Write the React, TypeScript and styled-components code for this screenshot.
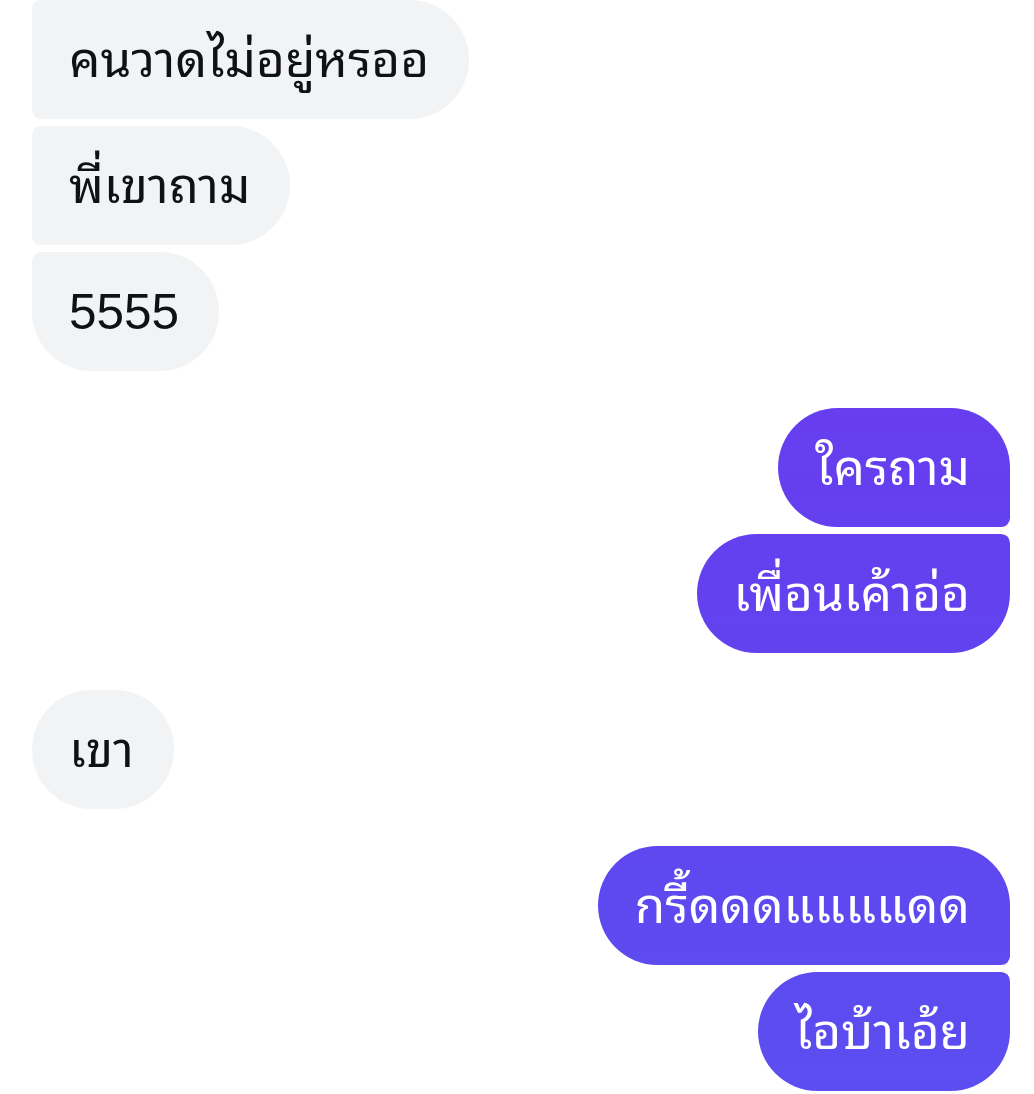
import styled, { createGlobalStyle, css } from "styled-components";

const GlobalStyle = createGlobalStyle`
  html, body {
    margin: 0;
    padding: 0;
    background: #ffffff;
  }
  body {
    font-family: "Liberation Sans", "Noto Sans Thai Looped", "Noto Looped Thai UI", "Noto Looped Thai",
      "Loma", "Garuda", "Tlwg Typo", "Kinnari", "Noto Sans Thai", "Noto Sans", sans-serif;
  }
`;

type Side = "in" | "out";
type Pos = "single" | "first" | "middle" | "last";

const Thread = styled.main`
  display: flex;
  flex-direction: column;
  gap: 37px;
  padding: 0 24px 0 32px;
  width: 1034px;
  box-sizing: border-box;
`;

const Group = styled.section<{ $side: Side }>`
  display: flex;
  flex-direction: column;
  gap: 7px;
  align-items: ${(p) => (p.$side === "out" ? "flex-end" : "flex-start")};
`;

const BIG = "60px";
const SMALL = "9px";

function radius(side: Side, pos: Pos) {
  const topNear = pos === "single" || pos === "first" ? BIG : SMALL;
  const bottomNear = pos === "single" || pos === "last" ? BIG : SMALL;
  if (side === "in") {
    return `${topNear} ${BIG} ${BIG} ${bottomNear}`;
  }
  return `${BIG} ${topNear} ${bottomNear} ${BIG}`;
}

const Bubble = styled.div<{ $side: Side; $pos: Pos }>`
  height: 119px;
  box-sizing: border-box;
  display: flex;
  align-items: center;
  padding: 0 40px 0 37px;
  font-size: 49.5px;
  line-height: 1;
  white-space: nowrap;
  border-radius: ${(p) => radius(p.$side, p.$pos)};
  ${(p) =>
    p.$side === "in"
      ? css`
          background: #f2f3f5;
          color: #101114;
        `
      : css`
          color: #ffffff;
          background: linear-gradient(180deg, #6d38f0 0px, #6440ef 550px, #5b4ef0 1094px);
          background-attachment: fixed;
        `}
`;

const groups: { side: Side; texts: string[]; cutTop?: boolean }[] = [
  { side: "in", texts: ["คนวาดไม่อยู่หรออ", "พี่เขาถาม", "5555"], cutTop: true },
  { side: "out", texts: ["ใครถาม", "เพื่อนเค้าอ่อ"] },
  { side: "in", texts: ["เขา"] },
  { side: "out", texts: ["กรี้ดดดแแแแดด", "ไอบ้าเอ้ย"] },
];

function posOf(i: number, n: number, cutTop?: boolean): Pos {
  if (n === 1) return "single";
  if (i === 0) return cutTop ? "middle" : "first";
  if (i === n - 1) return "last";
  return "middle";
}

export default function App() {
  return (
    <>
      <GlobalStyle />
      <Thread>
        {groups.map((g, gi) => (
          <Group key={gi} $side={g.side}>
            {g.texts.map((t, i) => (
              <Bubble key={i} $side={g.side} $pos={posOf(i, g.texts.length, g.cutTop)}>
                {t}
              </Bubble>
            ))}
          </Group>
        ))}
      </Thread>
    </>
  );
}
